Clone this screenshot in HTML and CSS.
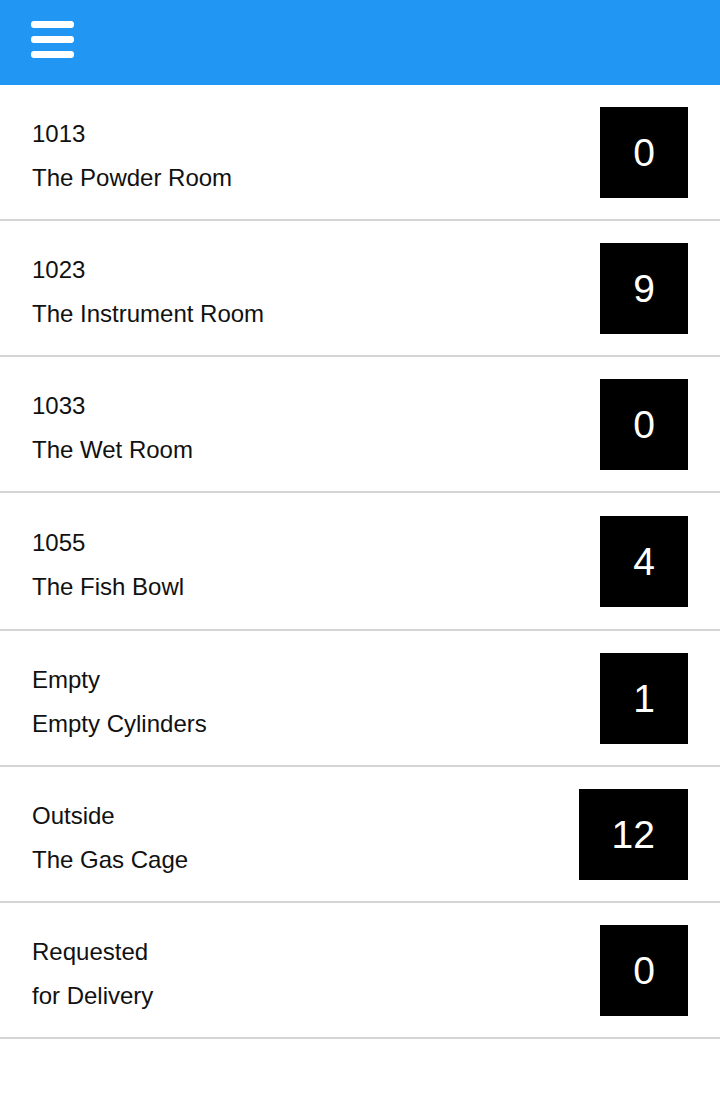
FILE: index.html
```html
<!DOCTYPE html>
<html lang="en">
<head>
<meta charset="utf-8">
<title>Locations</title>
<link rel="stylesheet" href="styles.css">
</head>
<body>
<header class="topbar">
  <button class="menu" aria-label="Menu">
    <span class="bar"></span>
    <span class="bar"></span>
    <span class="bar"></span>
  </button>
</header>
<ul class="list">
  <li class="row"><div class="label"><div>1013</div><div>The Powder Room</div></div><div class="count">0</div></li>
  <li class="row"><div class="label"><div>1023</div><div>The Instrument Room</div></div><div class="count">9</div></li>
  <li class="row"><div class="label"><div>1033</div><div>The Wet Room</div></div><div class="count">0</div></li>
  <li class="row row-tall"><div class="label"><div>1055</div><div>The Fish Bowl</div></div><div class="count">4</div></li>
  <li class="row"><div class="label"><div>Empty</div><div>Empty Cylinders</div></div><div class="count">1</div></li>
  <li class="row"><div class="label"><div>Outside</div><div>The Gas Cage</div></div><div class="count">12</div></li>
  <li class="row"><div class="label"><div>Requested</div><div>for Delivery</div></div><div class="count">0</div></li>
</ul>
</body>
</html>
```
FILE: styles.css
```css
* { box-sizing: border-box; }
html, body {
  margin: 0;
  padding: 0;
  background: #fff;
  font-family: "Liberation Sans", Arial, sans-serif;
  color: #111;
}
.topbar {
  height: 85px;
  background: #2196F3;
  padding: 21px 0 0 31px;
}
.menu {
  display: flex;
  flex-direction: column;
  gap: 8px;
  padding: 0;
  margin: 0;
  border: 0;
  background: transparent;
}
.bar {
  display: block;
  width: 43px;
  height: 7px;
  border-radius: 3px;
  background: #fff;
}
.list {
  list-style: none;
  margin: 0;
  padding: 0;
}
.row {
  display: flex;
  align-items: center;
  justify-content: space-between;
  height: 136px;
  padding: 0 32px;
  border-bottom: 2px solid #d4d4d4;
}
.row-tall {
  height: 138px;
}
.label {
  font-size: 24px;
  line-height: 44px;
  margin-top: 8px;
}
.count {
  background: #000;
  color: #fff;
  font-size: 39px;
  height: 91px;
  line-height: 91px;
  padding: 0 33px;
}
```
